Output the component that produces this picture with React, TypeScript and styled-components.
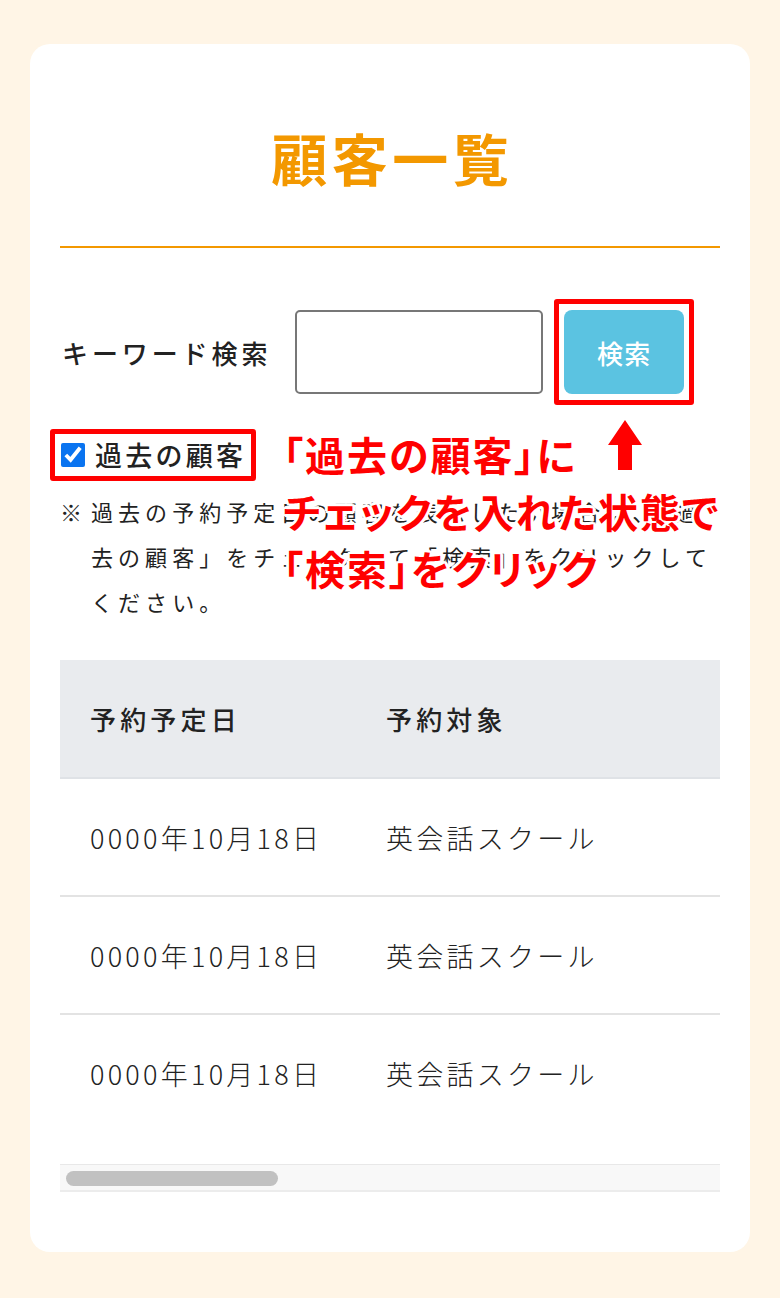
import React from 'react';
import styled, { createGlobalStyle } from 'styled-components';

const GlobalStyle = createGlobalStyle`
  * {
    box-sizing: border-box;
  }
  body {
    margin: 0;
    background: #fff5e6;
    font-family: "Noto Sans CJK JP", "Noto Sans", sans-serif;
    color: #222;
  }
`

const Page = styled.div`
  padding: 44px 30px 46px;
`

const Card = styled.main`
  background: #fff;
  border-radius: 20px;
  padding: 0 30px 60px;
`

const Title = styled.h1`
  margin: 0;
  padding: 80px 0 56px;
  text-align: center;
  font-size: 56px;
  line-height: 66px;
  font-weight: 700;
  letter-spacing: 0.08em;
  text-indent: 0.08em;
  color: #f39800;
  border-bottom: 2px solid #f39800;
`

const FormArea = styled.section`
  position: relative;
  padding-top: 51px;
`

const SearchRow = styled.div`
  display: flex;
  align-items: center;
`

const Label = styled.label`
  font-size: 26px;
  font-weight: 500;
  letter-spacing: 0.15em;
  margin-left: 2px;
  margin-right: 24px;
`

const KeywordInput = styled.input`
  width: 248px;
  height: 84px;
  border: 2px solid #777;
  border-radius: 5px;
  background: #fff;
`

const Highlight = styled.div<{ $offset?: number }>`
  border: 5px solid #ff0000;
  border-radius: 3px;
  margin-left: ${p => p.$offset ?? 0}px;
`

const ButtonFrame = styled(Highlight)`
  padding: 6px 5px;
`

const SearchButton = styled.button`
  width: 120px;
  height: 84px;
  border: none;
  border-radius: 8px;
  background: #5bc3e1;
  color: #fff;
  font-family: inherit;
  font-size: 26px;
  font-weight: 500;
  letter-spacing: 0.05em;
`

const CheckFrame = styled(Highlight)`
  display: inline-flex;
  align-items: center;
  gap: 10px;
  margin-top: 24px;
  padding: 4px 5px 5px 6px;
`

const Check = styled.input`
  width: 24px;
  height: 24px;
  margin: 0;
  accent-color: #0a74f0;
`

const CheckLabel = styled.span`
  font-size: 27px;
  font-weight: 500;
  letter-spacing: 0.12em;
  line-height: 33px;
`

const Note = styled.p`
  display: flex;
  margin: 8px 0 0;
  font-size: 22px;
  line-height: 45px;
  letter-spacing: 0.23em;
`

const NoteMark = styled.span`
  flex: 0 0 31px;
  letter-spacing: 0;
`

const Annotation = styled.div`
  position: absolute;
  left: 223px;
  top: 178px;
  color: #ff0000;
  font-size: 40px;
  font-weight: 700;
  line-height: 57px;
  font-feature-settings: "palt";
  letter-spacing: 0.05em;
  white-space: nowrap;
  text-shadow:
    3px 0 0 #fff, -3px 0 0 #fff, 0 3px 0 #fff, 0 -3px 0 #fff,
    2px 2px 0 #fff, -2px 2px 0 #fff, 2px -2px 0 #fff, -2px -2px 0 #fff;
`

const Arrow = styled.svg`
  position: absolute;
  left: 548px;
  top: 172px;
`

const TableWrap = styled.div`
  margin-top: 36px;
  overflow: hidden;
`

const Table = styled.table`
  width: 100%;
  border-collapse: collapse;
  table-layout: fixed;
`

const HeadCell = styled.th<{ $width?: number }>`
  width: ${p => (p.$width ? `${p.$width}px` : 'auto')};
  height: 118px;
  padding: 0 30px;
  text-align: left;
  background: #e9ebee;
  border-bottom: 2px solid #dfe2e6;
  font-size: 26px;
  font-weight: 500;
  letter-spacing: 0.16em;
`

const Row = styled.tr<{ $last?: boolean }>`
  border-bottom: ${p => (p.$last ? 'none' : '2px solid #e3e3e3')};
`

const Cell = styled.td`
  height: 118px;
  padding: 0 30px;
  font-size: 27px;
  font-weight: 300;
  letter-spacing: 0.12em;
  white-space: nowrap;
`

const ScrollTrack = styled.div`
  margin-top: 32px;
  height: 28px;
  padding: 6px;
  background: #f8f8f8;
  border-top: 1px solid #e8e8e8;
  border-bottom: 2px solid #ececec;
`

const ScrollThumb = styled.div`
  width: 212px;
  height: 15px;
  border-radius: 8px;
  background: #c1c1c1;
`

const rows = [
  { date: '0000年10月18日', target: '英会話スクール' },
  { date: '0000年10月18日', target: '英会話スクール' },
  { date: '0000年10月18日', target: '英会話スクール' },
];

const App: React.FC = () => {
  return (
    <Page>
      <GlobalStyle />
      <Card>
        <Title>顧客一覧</Title>

        <FormArea>
          <SearchRow>
            <Label htmlFor="keyword">キーワード検索</Label>
            <KeywordInput id="keyword" type="text" />
            <ButtonFrame $offset={11}>
              <SearchButton type="button">検索</SearchButton>
            </ButtonFrame>
          </SearchRow>

          <CheckFrame as="label" $offset={-10}>
            <Check type="checkbox" defaultChecked />
            <CheckLabel>過去の顧客</CheckLabel>
          </CheckFrame>

          <Note>
            <NoteMark>※</NoteMark>
            <span>過去の予約予定日の顧客を表示したい場合は、「過去の顧客」をチェックして「検索」をクリックしてください。</span>
          </Note>

          <Annotation>
            「過去の顧客」に<br />
            チェックを入れた状態で<br />
            「検索」をクリック
          </Annotation>
          <Arrow width="34" height="50" viewBox="0 0 34 50">
            <polygon points="17,0 34,25 24,25 24,50 10,50 10,25 0,25" fill="#ff0000" />
          </Arrow>
        </FormArea>

        <TableWrap>
          <Table>
            <thead>
              <tr>
                <HeadCell $width={296}>予約予定日</HeadCell>
                <HeadCell>予約対象</HeadCell>
              </tr>
            </thead>
            <tbody>
              {rows.map((r, i) => (
                <Row key={i} $last={i === rows.length - 1}>
                  <Cell>{r.date}</Cell>
                  <Cell>{r.target}</Cell>
                </Row>
              ))}
            </tbody>
          </Table>
          <ScrollTrack>
            <ScrollThumb />
          </ScrollTrack>
        </TableWrap>
      </Card>
    </Page>
  );
};

export default App
